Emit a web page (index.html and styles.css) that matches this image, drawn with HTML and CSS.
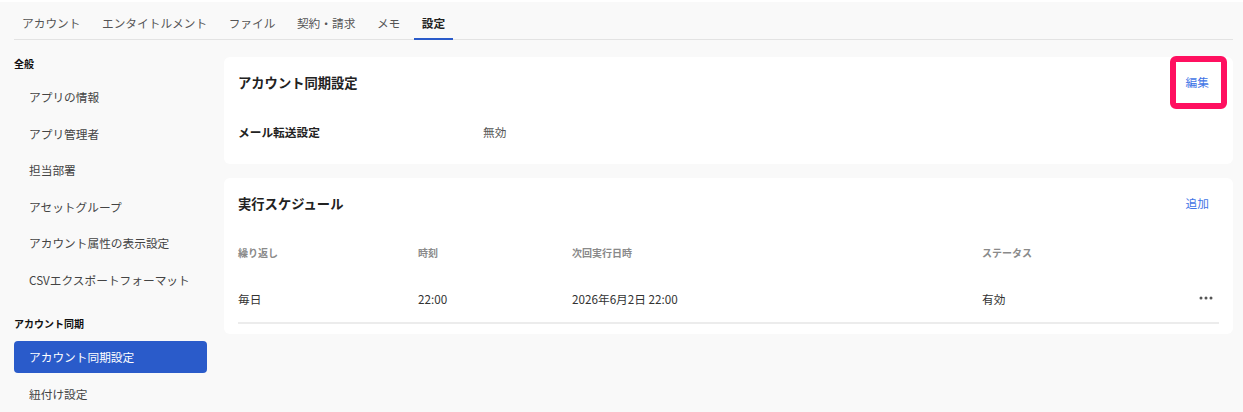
FILE: index.html
```html
<!DOCTYPE html>
<html lang="ja">
<head>
  <meta charset="UTF-8" />
  <meta name="viewport" content="width=device-width, initial-scale=1" />
  <title>設定</title>
  <link rel="stylesheet" href="styles.css">
</head>
<body>
  <nav class="tabs">
    <a class="tab">アカウント</a>
    <a class="tab">エンタイトルメント</a>
    <a class="tab">ファイル</a>
    <a class="tab">契約・請求</a>
    <a class="tab">メモ</a>
    <a class="tab active">設定</a>
  </nav>

  <div class="layout">
    <aside class="sidebar">
      <div class="side-title">全般</div>
      <a class="side-item">アプリの情報</a>
      <a class="side-item">アプリ管理者</a>
      <a class="side-item">担当部署</a>
      <a class="side-item">アセットグループ</a>
      <a class="side-item">アカウント属性の表示設定</a>
      <a class="side-item">CSVエクスポートフォーマット</a>

      <div class="side-title second">アカウント同期</div>
      <a class="side-item selected">アカウント同期設定</a>
      <a class="side-item">紐付け設定</a>
    </aside>

    <main class="content">
      <section class="card">
        <div class="card-head">
          <h2>アカウント同期設定</h2>
          <a class="link-btn marked">編集</a>
        </div>
        <div class="field">
          <div class="field-label">メール転送設定</div>
          <div class="field-value">無効</div>
        </div>
      </section>

      <section class="card">
        <div class="card-head">
          <h2>実行スケジュール</h2>
          <a class="link-btn">追加</a>
        </div>
        <div class="sched">
          <div class="sched-row head">
            <div>繰り返し</div>
            <div>時刻</div>
            <div>次回実行日時</div>
            <div>ステータス</div>
            <div></div>
          </div>
          <div class="sched-row">
            <div>毎日</div>
            <div>22:00</div>
            <div>2026年6月2日 22:00</div>
            <div>有効</div>
            <div class="more">
              <svg width="14" height="4" viewBox="0 0 14 4">
                <circle cx="2" cy="2" r="1.5" fill="#555" />
                <circle cx="7" cy="2" r="1.5" fill="#555" />
                <circle cx="12" cy="2" r="1.5" fill="#555" />
              </svg>
            </div>
          </div>
        </div>
      </section>
    </main>
  </div>
</body>
</html>
```

FILE: styles.css
```css
body {
  margin: 0;
  border-top: 2px solid #fff;
  background: #f9f9f9;
  font-family: "Noto Sans CJK JP", "Noto Sans", sans-serif;
  font-size: 11.7px;
  color: #333;
}
a {
  cursor: pointer;
}
.tabs {
  display: flex;
  gap: 5.5px;
  margin: 0 10px 0 14px;
  height: 37px;
  border-bottom: 1px solid #e3e3e3;
}
.tab {
  display: flex;
  align-items: center;
  padding: 4px 8px 0;
  color: #555;
  border-bottom: 2px solid transparent;
  margin-bottom: -1px;
}
.tab.active {
  color: #222;
  font-weight: bold;
  border-bottom-color: #2a5bca;
}
.layout {
  display: flex;
  gap: 17px;
  padding: 15px 10px 0 14px;
}
.sidebar {
  width: 193px;
  flex-shrink: 0;
  display: flex;
  flex-direction: column;
}
.side-title {
  font-size: 10px;
  font-weight: bold;
  color: #111;
  height: 18px;
  line-height: 18px;
  margin-bottom: 8px;
}
.side-title.second {
  margin-top: 15px;
}
.side-item {
  height: 32px;
  line-height: 31px;
  padding-left: 15px;
  margin-bottom: 4.5px;
  border-radius: 4px;
  color: #444;
}
.side-item.selected {
  background: #2a5bca;
  color: #fff;
}
.content {
  flex: 1;
  display: flex;
  flex-direction: column;
  gap: 14px;
  margin-top: 2px;
}
.card {
  background: #fff;
  border-radius: 6px;
  padding: 0 14px 10px;
}
.card-head {
  height: 50px;
  padding-bottom: 2px;
  display: flex;
  align-items: center;
  justify-content: space-between;
}
.card-head h2 {
  margin: 0;
  font-size: 13.3px;
  font-weight: bold;
  color: #222;
}
.link-btn {
  position: relative;
  padding: 0 10px;
  line-height: 32px;
  color: #3f74e6;
}
/* annotation frame drawn over the edit button */
.link-btn.marked::after {
  content: "";
  position: absolute;
  top: -10px;
  bottom: -11px;
  left: -6px;
  right: -8px;
  border: 6px solid #ff1060;
  border-radius: 6px;
}
.field {
  display: flex;
  align-items: center;
  height: 44px;
  margin-bottom: 1px;
}
.field-label {
  width: 245px;
  font-weight: bold;
  color: #222;
}
.field-value {
  color: #555;
}
.sched-row {
  display: grid;
  grid-template-columns: 180px 154px 410px 1fr 40px;
  align-items: center;
  height: 48px;
  border-bottom: 2px solid #ececec;
  color: #333;
}
.sched-row.head {
  height: 44px;
  border-bottom: none;
  font-size: 10px;
  font-weight: bold;
  color: #8a8a8a;
}
.more {
  justify-self: end;
  padding-right: 6px;
  display: flex;
}
```
